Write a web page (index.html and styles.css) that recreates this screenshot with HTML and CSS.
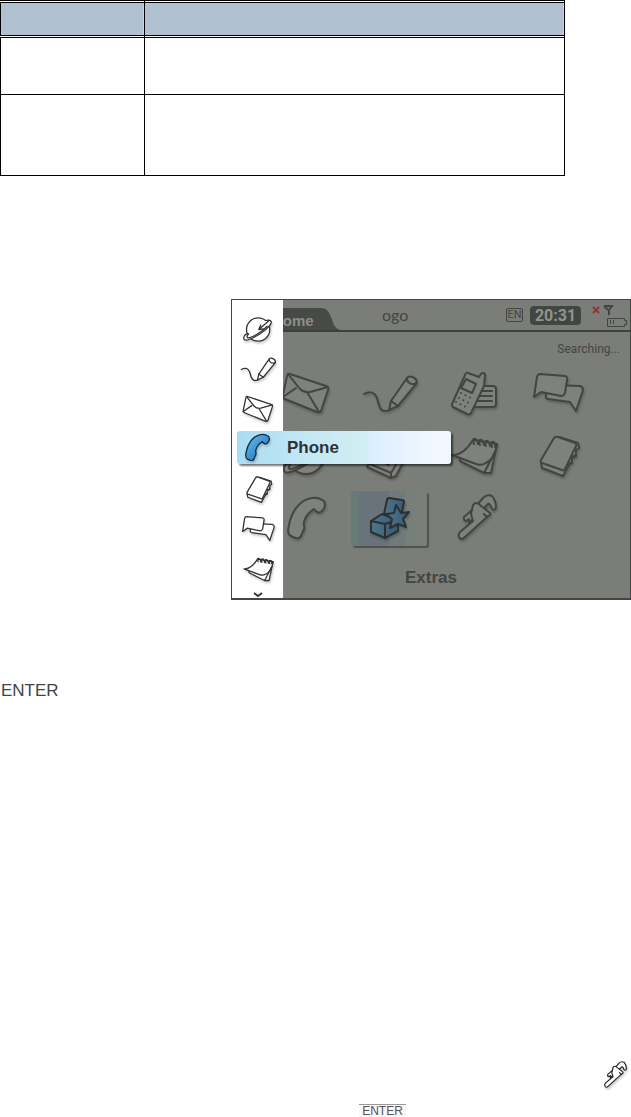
FILE: index.html
```html
<!DOCTYPE html>
<html lang="en">
<head>
<meta charset="utf-8">
<title>Phone menu</title>
<link rel="stylesheet" href="styles.css">
</head>
<body>
<svg class="defs" aria-hidden="true">
  <defs>
    <linearGradient id="blue" x1="0" y1="0" x2="1" y2="1"><stop offset="0" stop-color="#6ec0ee"/><stop offset="1" stop-color="#1268b4"/></linearGradient>
    <linearGradient id="teal" x1="0" y1="0" x2="1" y2="0"><stop offset="0" stop-color="#4d7688"/><stop offset="1" stop-color="#3a5878"/></linearGradient>
  </defs>
  <symbol id="globe" viewBox="0 0 48 48">
    <circle cx="25" cy="24" r="18"/>
    <path d="M10 31C4 30 1 37 4 40C8 43 31 31 41 20C48 13 46 8 38 10" />
    <path class="line" d="M10 31C8 33 7 36 9 37C15 37 31 28 39 19M42 10L26 24M34 23L26 24L29 17"/>
  </symbol>
  <symbol id="pencil" viewBox="0 0 48 48">
    <path class="line" d="M-1 24C4 21 9 22 11 26C14 31 13 41 20 41C22 41 23 41 25 40"/>
    <path d="M24 40L26 31L42 8C45 4 54 9 51 14L33 36Z"/>
    <path class="line" d="M26 31L33 36M42 8C41 12 47 16 51 13"/>
  </symbol>
  <symbol id="mail" viewBox="0 0 48 48">
    <path d="M9 4L45 16Q48 17 47 20L40 41Q39 43 36 42L4 29Q1 28 2 25L6 6Q7 3 9 4Z"/>
    <path class="line" d="M7 4L19 19Q23 23 29 22L47 17M2 27L15 18M38 42L26 22"/>
  </symbol>
  <symbol id="mobile" viewBox="0 0 48 48">
    <rect x="24" y="16" width="23" height="21" rx="3"/>
    <path class="line" d="M30 21H43M30 26H43M28 31H43"/>
    <path d="M19 3L30 7L32 4Q34 2 36 4L35 16L22 43Q21 45 18 44L4 37Q2 35 4 32L16 5Q17 2 19 3Z"/>
    <path d="M17 9L27 14L23 23L12 18Z"/>
    <path class="dots" d="M12 23L22 28M10 28L20 33M7 32L17 37"/>
  </symbol>
  <symbol id="chat" viewBox="0 0 48 48">
    <path d="M17 15L47 16Q50 17 50 20L43 41L37 32L15 29Q12 28 13 25Z"/>
    <path d="M7 4L32 6Q35 7 34 10L32 23Q31 26 28 26L8 22L1 27L4 7Q5 4 7 4Z"/>
  </symbol>
  <symbol id="calendar" viewBox="0 0 48 48">
    <path d="M11 23L11 29L35 41L42 41L48 12L36 16Z"/>
    <path d="M24 8L48 12Q46 27 37 31Q32 34 27 32L3 23Q14 24 24 8Z"/>
    <path class="line" d="M46 20L35 41M25 12C22 5 28 5 29 12M31 13C28 6 34 6 35 13M37 14C34 7 40 7 41 14M43 15C40 8 47 8 46 15"/>
  </symbol>
  <symbol id="book" viewBox="0 0 48 48">
    <path d="M26 5L45 11L46 16L43 18L43 24L39 26L39 31L36 33L30 44L9 36L8 31Z"/>
    <path d="M25 5L42 11Q44 12 43 14L32 37Q31 39 29 38L9 31Q7 30 8 28L21 6Q22 4 25 5Z"/>
    <path class="line" d="M39 25L43 23M35 32L39 30"/>
  </symbol>
  <symbol id="notes" viewBox="0 0 48 48">
    <path d="M18 4L45 17L31 44L26 46L2 35Z"/>
    <path class="line" d="M41 16L26 41L3 31M26 41L26 46M12 27L24 33M15 22L28 28"/>
  </symbol>
  <symbol id="handset" viewBox="0 0 48 48">
    <path d="M31 4C35 3 40 5 43 7C45 11 43 15 41 17C38 20 35 18 33 15C28 18 24 23 23 28C22 32 25 34 22 37L20 42C18 46 14 44 10 42C6 40 7 36 8 31C10 20 17 6 31 4Z"/>
  </symbol>
  <symbol id="extras" viewBox="0 0 48 48">
    <path d="M24 4L37 6Q39 6 39 8L36 22L19 20L22 6Q22 4 24 4Z"/>
    <path d="M6 27L17 20L33 26L33 37L20 44L6 38Z"/>
    <path class="line" d="M6 27L20 30L33 26M20 30V44"/>
    <path d="M31 11L36 19L44 18L38 25L41 33L33 30L25 34L27 25L21 20L29 19Z"/>
  </symbol>
  <symbol id="wrench" viewBox="0 0 48 48">
    <path d="M23 16L15 23Q14 26 17 27L20 25L20 29L26 23Z"/>
    <path d="M28 11L34 4Q38 0 43 2Q47 7 47 13Q46 17 43 15Q41 9 39 10L34 15Z"/>
    <path d="M31 11L41 19Q42 21 39 22L16 43Q12 47 10 43Q9 41 11 38L24 27L22 20L24 11Q27 7 31 11Z"/>
    <path class="line" d="M35 20L38 23"/>
  </symbol>
</svg>

<main class="page">
  <table class="keys">
    <colgroup><col class="key-col"><col></colgroup>
    <thead><tr><th></th><th></th></tr></thead>
    <tbody>
      <tr class="short"><td></td><td></td></tr>
      <tr class="tall"><td></td><td></td></tr>
    </tbody>
  </table>

  <section class="screen">
    <header class="bar">
      <div class="tab">
        <svg class="tab-shape" viewBox="0 0 110 22" preserveAspectRatio="xMaxYMid slice" aria-hidden="true"><path d="M0 0H89C95 0 97 4 99 9C102 17 103 22 110 22H0Z"/></svg>
        <span>Home</span>
      </div>
      <span class="brand">ogo</span>
      <span class="lang">EN</span>
      <time class="clock">20:31</time>
      <svg class="status" viewBox="0 0 36 24" aria-hidden="true">
        <path class="off" d="M1 4L7 10M7 4L1 10"/>
        <path class="mast" d="M12 3H20L17 7V12M12 3L16 7"/>
        <path d="M15.500 15.500H32.500V17.500H34.500V21.500H32.500V23.500H15.500ZM18.500 17V21M21.500 17V21"/>
      </svg>
    </header>
    <p class="network">Searching...</p>
    <div class="apps">
      <svg class="icon"><use href="#mail"/></svg>
      <svg class="icon"><use href="#pencil"/></svg>
      <svg class="icon"><use href="#mobile"/></svg>
      <svg class="icon"><use href="#chat"/></svg>
      <svg class="icon"><use href="#globe"/></svg>
      <svg class="icon"><use href="#notes"/></svg>
      <svg class="icon"><use href="#calendar"/></svg>
      <svg class="icon"><use href="#book"/></svg>
      <svg class="icon"><use href="#handset"/></svg>
      <div class="chosen"><svg class="icon"><use href="#extras"/></svg></div>
      <svg class="icon"><use href="#wrench"/></svg>
    </div>
    <p class="caption">Extras</p>

    <nav class="side">
      <div class="item"><svg class="icon"><use href="#globe"/></svg></div>
      <div class="item"><svg class="icon"><use href="#pencil"/></svg></div>
      <div class="item"><svg class="icon"><use href="#mail"/></svg></div>
      <div class="item current"><svg class="icon"><use href="#handset"/></svg><span>Phone</span></div>
      <div class="item"><svg class="icon"><use href="#book"/></svg></div>
      <div class="item"><svg class="icon"><use href="#chat"/></svg></div>
      <div class="item"><svg class="icon"><use href="#calendar"/></svg></div>
      <svg class="more" viewBox="0 0 10 6" aria-hidden="true"><path d="M1 1L5 4L9 1"/></svg>
    </nav>
  </section>

  <p class="enter">ENTER</p>
  <div class="tool"><svg class="icon"><use href="#wrench"/></svg></div>
  <p class="step"><span class="enter-small">ENTER</span></p>
</main>
</body>
</html>
```
FILE: styles.css
```css
* {
  box-sizing: border-box;
}

body {
  margin: 0;
  background: #fff;
  font-family: "Liberation Sans", Arial, sans-serif;
}

p {
  margin: 0;
}

.defs {
  position: absolute;
  width: 0;
  height: 0;
}

.page {
  display: flex;
  flex-direction: column;
}

/* Table */
.keys {
  margin-right: 66px;
  border-collapse: separate;
  border-spacing: 0;
  table-layout: fixed;
}

.key-col {
  width: 145px;
}

.keys th,
.keys td {
  padding: 0;
  border-right: 1px solid #000;
  border-bottom: 1px solid #000;
}

.keys th:first-child,
.keys td:first-child {
  border-left: 1px solid #000;
}

.keys th {
  height: 38px;
  border-top: 3px double #000;
  border-bottom: 3px double #000;
  background: #b2c1d1;
  background-clip: padding-box;
  box-shadow: inset -1px 0 #c9d6e0;
}

.short td {
  height: 57px;
}

.tall td {
  height: 81px;
}

/* Icons */
.icon {
  display: block;
  flex: none;
  width: 48px;
  height: 48px;
  overflow: visible;
  fill: #7f817c;
  stroke: #434541;
  stroke-width: 2;
  stroke-linejoin: round;
  stroke-linecap: round;
  filter: drop-shadow(1px 2px 1px #0003);
}

symbol {
  overflow: visible;
}

.line {
  fill: none;
}

.dots {
  stroke-dasharray: 0 5;
}

/* Device screen */
.screen {
  position: relative;
  margin: 123px 0 0 231px;
  border: 1px solid #444643;
  border-bottom-width: 2px;
  background: #7b7d78;
  color: #434541;
}

.bar {
  display: flex;
  align-items: center;
  height: 32px;
  padding-right: 2px;
  border-bottom: 2px solid #3e403d;
}

.tab {
  position: relative;
  align-self: flex-end;
  width: 110px;
  height: 22px;
  padding-left: 40px;
  color: #8c8e89;
  font: bold 15px/26px "Liberation Sans", Arial, sans-serif;
}

.tab-shape {
  position: absolute;
  inset: 0;
  width: 100%;
  height: 100%;
  fill: #484a47;
}

.tab span {
  position: relative;
}

.brand {
  margin: 0 auto 0 40px;
  font: 16px/16px Lato, sans-serif;
}

.lang {
  width: 17px;
  border: 1px solid #434541;
  border-radius: 2px;
  font: 11px/12px Roboto, sans-serif;
  text-align: center;
}

.clock {
  width: 51px;
  margin: 0 11px 0 7px;
  border-radius: 4px;
  background: #434541;
  color: #92948f;
  font: bold 16px/19px Roboto, sans-serif;
  text-align: center;
}

.status {
  width: 36px;
  height: 24px;
  overflow: visible;
  fill: none;
  stroke: #434541;
}

.mast {
  stroke-width: 2;
}

.off {
  stroke: #8c3a38;
  stroke-width: 2;
}

.network {
  padding: 8px 10px 0 0;
  font: 12px/18px Roboto, sans-serif;
  text-align: right;
}

.apps {
  display: grid;
  grid-template-columns: repeat(4, 1fr);
  grid-auto-rows: 62px;
  align-items: center;
  justify-items: center;
  padding: 5px 31px 0 31px;
}

.chosen {
  display: grid;
  place-items: center;
  width: 76px;
  height: 55px;
  border-radius: 3px;
  background: linear-gradient(90deg, #667a76 0 8px, #6a727a 8px 38px, #707a7a 38px 54px, #767f79 54px 66px, #7c7e79 66px);
  box-shadow: 2px 2px 1px #50524e;
}

.chosen .icon {
  fill: url(#teal);
  stroke: #2c302f;
}

.caption {
  padding: 18px 0 9px;
  font: bold 17px/22px "Liberation Sans", Arial, sans-serif;
  text-align: center;
}

/* Side menu lies over the home screen */
.side {
  position: absolute;
  top: 0;
  bottom: 0;
  left: 0;
  width: 51px;
  padding-top: 9px;
  background: #fff;
}

.item {
  display: flex;
  align-items: center;
  justify-content: center;
  height: 40px;
}

.side .icon {
  width: 31px;
  height: 31px;
  fill: #fff;
  stroke: #333;
}

.item.current {
  justify-content: flex-start;
  gap: 15px;
  width: 214px;
  height: 33px;
  margin: 2px 0 5px 5px;
  padding-left: 4px;
  border-radius: 3px;
  background: linear-gradient(90deg, #a9dcf3 0, #c1e7f5 30%, #d3edf3 61%, #daeeff 62%, #f0f7ff 90%);
  box-shadow: 2px 2px 2px #0008;
  color: #2f3136;
  font: bold 17px/33px "Liberation Sans", Arial, sans-serif;
}

.side .current .icon {
  fill: url(#blue);
  stroke: #16273a;
}

.more {
  display: block;
  width: 10px;
  height: 6px;
  margin: 3px auto 0;
  fill: none;
  stroke: #333;
  stroke-width: 2;
}

/* Key names below the screen */
.enter {
  padding: 80px 0 0 1px;
  color: #444;
  font-size: 17px;
  line-height: 22px;
}

.tool {
  display: flex;
  justify-content: flex-end;
  padding: 359px 4px 0 0;
}

.tool .icon {
  width: 28px;
  height: 28px;
  fill: #fff;
  stroke: #222;
}

.step {
  display: flex;
  padding: 15px 0 0 359px;
}

.enter-small {
  width: 47px;
  border-top: 1px solid #999;
  background: #f8f8f8;
  color: #555;
  font-size: 12px;
  line-height: 12px;
  text-align: center;
}
```
